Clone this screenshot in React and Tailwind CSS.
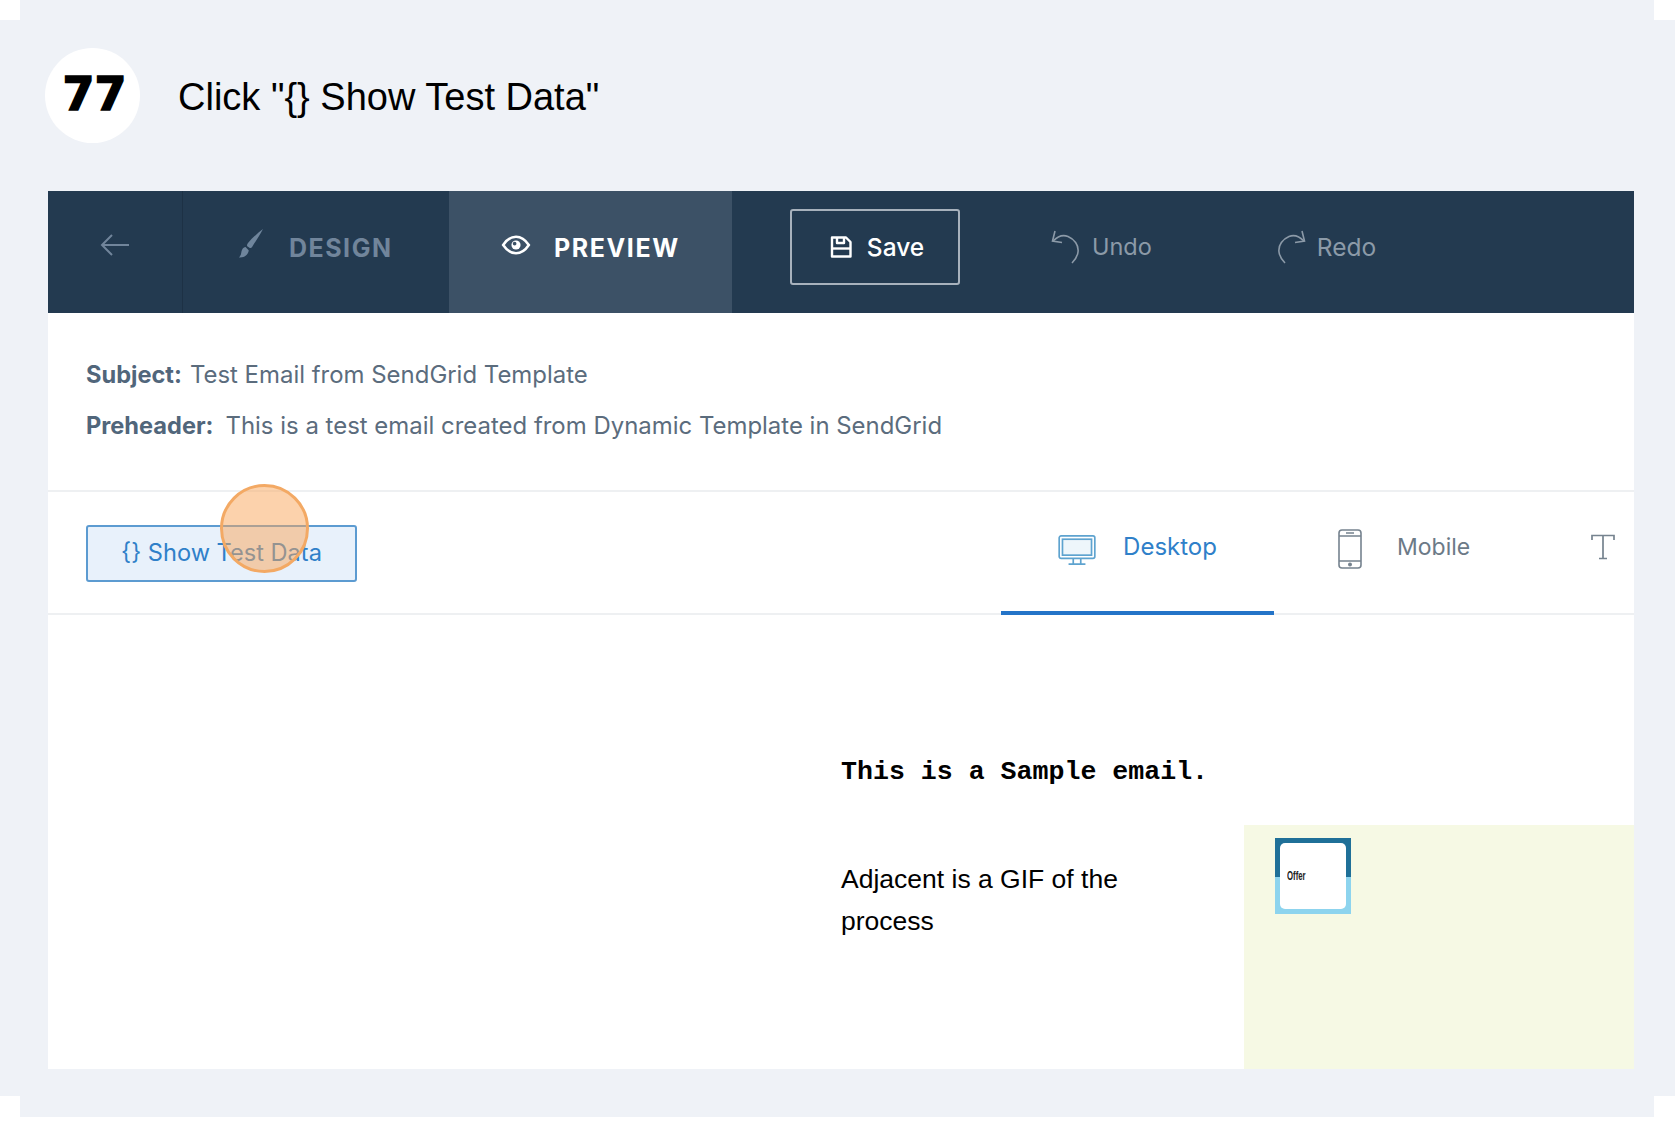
import React from "react";

const sans = "font-['Inter',sans-serif]";

function BrushIcon() {
  return (
    <svg width="28" height="30" viewBox="0 0 28 30" fill="#6f859c">
      <path d="M26 1 C22 4 15 10 11 15 C10 16.5 9.8 17.5 10.2 18.2 L12.8 20 C13.8 20.2 14.6 19.6 15.4 18.4 C19 13 23 6.5 26 1 Z" />
      <path d="M8.6 19 C5.5 19.5 4.8 22 4.2 25 C3.9 27 3 28.5 2 29.5 C6.5 29.8 10.8 27.8 11.8 22.6 Z" />
    </svg>
  );
}

function EyeIcon() {
  return (
    <svg width="30" height="22" viewBox="0 0 32 24" fill="none" stroke="#fff" strokeWidth="2.8">
      <path d="M2 12 C6 6 10.5 3 16 3 C21.5 3 26 6 30 12 C26 18 21.5 21 16 21 C10.5 21 6 18 2 12 Z" />
      <circle cx="16" cy="12" r="5" fill="#fff" stroke="none" />
      <circle cx="14.5" cy="10.5" r="2" fill="#3c5166" stroke="none" />
    </svg>
  );
}

function SaveIcon() {
  return (
    <svg width="24" height="24" viewBox="0 0 24 24" fill="none" stroke="#fff" strokeWidth="2.4" strokeLinejoin="round">
      <path d="M3 2.5 H17 L21.5 7 V21.5 H3 Z" />
      <path d="M3 13.5 H21.5" />
      <path d="M8 2.5 V8 H15 V2.5" />
    </svg>
  );
}

function UndoIcon({ flip }) {
  return (
    <svg width="32" height="34" viewBox="0 0 32 34" fill="none" stroke="#8c9aa8" strokeWidth="1.6" className={flip ? "-scale-x-100" : ""}>
      <path d="M3 11 C8 6 13 4.5 18 6.5 C24 9 29 15 28 22 C27.5 26 25 30 22 33" />
      <path d="M5 1 L2.5 11 L12 12.5" />
    </svg>
  );
}

function DesktopIcon() {
  return (
    <svg width="38" height="30" viewBox="0 0 40 32" fill="none" stroke="#5ea3cf" strokeWidth="1.8">
      <rect x="1" y="1" width="38" height="24" rx="2" />
      <rect x="4.5" y="4.5" width="31" height="17" fill="#eef6fb" />
      <path d="M16 25 V30 M24 25 V30 M11 31 H29" />
    </svg>
  );
}

function PhoneIcon() {
  return (
    <svg width="24" height="40" viewBox="0 0 24 40" fill="none" stroke="#76838f" strokeWidth="1.6">
      <rect x="1" y="1" width="22" height="38" rx="3" />
      <path d="M1 7 H23 M1 32 H23 M8 4 H16" />
      <circle cx="12" cy="35.5" r="1.2" fill="#76838f" />
    </svg>
  );
}

function TIcon() {
  return (
    <svg width="24" height="26" viewBox="0 0 24 26" fill="none" stroke="#76838f" strokeWidth="1.7">
      <path d="M1 6 V1.5 H23 V6 M12 1.5 V24.5 M8 24.5 H16" />
    </svg>
  );
}

export default function App() {
  return (
    <div className={`relative w-[1680px] h-[1123px] bg-white overflow-hidden ${sans}`}>
      <div className="relative w-[1675px] h-[1117px] bg-[#eff2f7] px-[48px] pt-[48px]">
        <div className="absolute left-0 top-0 w-[20px] h-[20px] bg-white" />
        <div className="absolute right-0 top-0 w-[21px] h-[20px] bg-white" />
        <div className="absolute left-0 bottom-0 w-[20px] h-[21px] bg-white" />
        <div className="absolute right-0 bottom-0 w-[21px] h-[21px] bg-white" />

        <div className="flex items-center h-[95px] -ml-[3px]">
          <div className="w-[95px] h-[95px] rounded-full bg-white flex items-center justify-center shrink-0">
            <span className="font-['DejaVu_Sans',sans-serif] font-bold text-[46px] leading-none text-black [-webkit-text-stroke:1.5px_black] -mt-[3px] ml-[4px]">77</span>
          </div>
          <div className="ml-[38px] font-['Liberation_Sans',sans-serif] text-[38px] leading-none text-black mt-[2px]">Click "{"{}"} Show Test Data"</div>
        </div>

        <div className="mt-[48px] w-[1586px] h-[878px] bg-white flex flex-col">
          <div className="h-[122px] bg-[#233a50] flex items-stretch shrink-0">
            <div className="w-[135px] flex items-center justify-center border-r border-[#1d3145]">
              <svg width="30" height="24" viewBox="0 0 30 24" fill="none" stroke="#71859b" strokeWidth="2" className="-mt-[14px]">
                <path d="M29 12 H2 M12 2 L2 12 L12 22" />
              </svg>
            </div>
            <div className="w-[266px] flex items-center pl-[54px] gap-[24px]">
              <span className="-mt-[18px]"><BrushIcon /></span>
              <span className="font-bold text-[25px] tracking-[1.5px] text-[#71859b] -mt-[6px]">DESIGN</span>
            </div>
            <div className="w-[283px] bg-[#3c5166] flex items-center pl-[52px] gap-[23px]">
              <span className="-mt-[14px]"><EyeIcon /></span>
              <span className="font-bold text-[25px] tracking-[1.6px] text-white -mt-[6px]">PREVIEW</span>
            </div>
            <div className="ml-[58px] mt-[18px] w-[170px] h-[76px] border-2 border-[#a7b1bc] rounded-[3px] flex items-center justify-center gap-[14px] pl-[3px]">
              <SaveIcon />
              <span className="text-[24.5px] font-medium text-white">Save</span>
            </div>
            <div className="ml-[90px] mt-[18px] h-[76px] flex items-center gap-[10px]">
              <UndoIcon />
              <span className="text-[23.5px] text-[#8c9aa8]">Undo</span>
            </div>
            <div className="ml-[123px] mt-[18px] h-[76px] flex items-center gap-[10px]">
              <UndoIcon flip />
              <span className="text-[24.5px] text-[#8c9aa8]">Redo</span>
            </div>
          </div>

          <div className="h-[179px] border-b-2 border-[#eef0f2] px-[38px] pt-[36px] text-[23.95px] leading-[51px] text-[#5b6c7d] shrink-0">
            <div className="h-[51px]"><b className="font-bold text-[23.6px] text-[#51667b] mr-[8px]">Subject:</b>Test Email from SendGrid Template</div>
            <div className="h-[51px]"><b className="font-bold text-[23.6px] text-[#51667b] mr-[12px]">Preheader:</b>This is a test email created from Dynamic Template in SendGrid</div>
          </div>

          <div className="h-[123px] border-b-2 border-[#eef0f2] flex shrink-0 relative">
            <div className="ml-[38px] mt-[33px] w-[271px] h-[57px] bg-[#e8f1fb] border-2 border-[#5c9bd1] rounded-[3px] flex items-center justify-center text-[23.6px] text-[#2f80c9] pb-[2px]">{"{}"} Show Test Data</div>
            <div className="ml-[644px] w-[273px] h-[123px] border-b-4 border-[#2474c8] flex items-start justify-center gap-[27px] pt-[37px]">
              <span className="mt-[6px]"><DesktopIcon /></span>
              <span className="text-[24px] text-[#2f80c9] leading-[36px]">Desktop</span>
            </div>
            <div className="ml-[64px] flex items-start pt-[37px] gap-[35px]">
              <PhoneIcon />
              <span className="text-[23px] text-[#6c7a87] leading-[36px]">Mobile</span>
            </div>
            <div className="ml-[121px] pt-[42px]"><TIcon /></div>
            <div className="absolute left-[172px] -top-[8px] w-[89px] h-[89px] rounded-full bg-[#f9a65a]/50 border-[3px] border-[#f3a964]" />
          </div>

          <div className="flex-1 flex pl-[793px]">
            <div className="w-[403px] pt-[142px]">
              <div className="font-['Liberation_Mono',monospace] font-bold text-[26.6px] leading-[30px] text-black whitespace-nowrap">This is a Sample email.</div>
              <div className="mt-[71px] w-[330px] font-['Liberation_Sans',sans-serif] text-[26.5px] leading-[42px] text-black">Adjacent is a GIF of the process</div>
            </div>
            <div className="flex-1 mt-[210px] bg-[#f6f9e4] pl-[31px] pt-[13px]">
              <div className="relative w-[76px] h-[76px] bg-[linear-gradient(#1f7098_0,#1f7098_51%,#8dd4ee_51%,#8dd4ee_100%)] p-[5px]">
                <div className="w-full h-full bg-white rounded-[5px] flex items-center pl-[7px]">
                  <span className="font-['Liberation_Sans',sans-serif] font-bold text-[13px] leading-none text-[#222] scale-x-[.6] origin-left -mt-[2px]">Offer</span>
                </div>
              </div>
            </div>
          </div>
        </div>
      </div>
    </div>
  );
}
